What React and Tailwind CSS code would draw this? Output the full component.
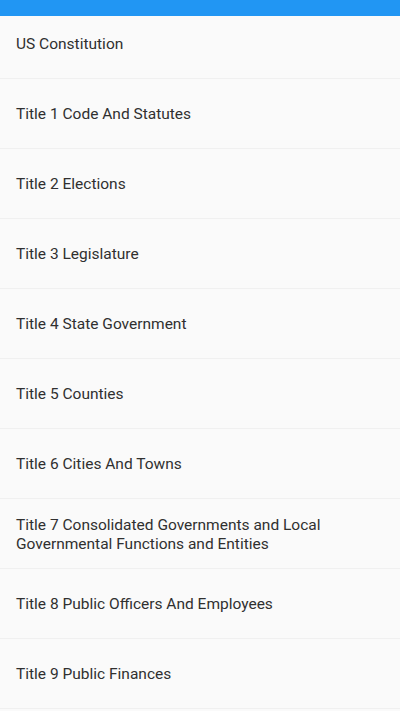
import React from 'react';

const titles = [
  'US Constitution',
  'Title 1 Code And Statutes',
  'Title 2 Elections',
  'Title 3 Legislature',
  'Title 4 State Government',
  'Title 5 Counties',
  'Title 6 Cities And Towns',
  'Title 7 Consolidated Governments and Local Governmental Functions and Entities',
  'Title 8 Public Officers And Employees',
  'Title 9 Public Finances',
];

export default function App() {
  return (
    <div className="w-[400px] h-[711px] overflow-hidden bg-[#fafafa]" style={{ fontFamily: 'Roboto, "Liberation Sans", sans-serif' }}>
      {/* barra superior */}
      <div className="h-4 bg-[#2196f3]" />

      <ul>
        {titles.map((t, i) => (
          <li
            key={t}
            className={`flex items-center px-4 border-b border-[#f0f0f0] text-[15.5px] leading-[19px] text-[#303030] ${i === 0 ? 'h-[63px] pb-[6px]' : 'h-[70px] pt-[2px]'}`}
          >
            <span className="pr-10">{t}</span>
          </li>
        ))}
      </ul>
    </div>
  );
}
